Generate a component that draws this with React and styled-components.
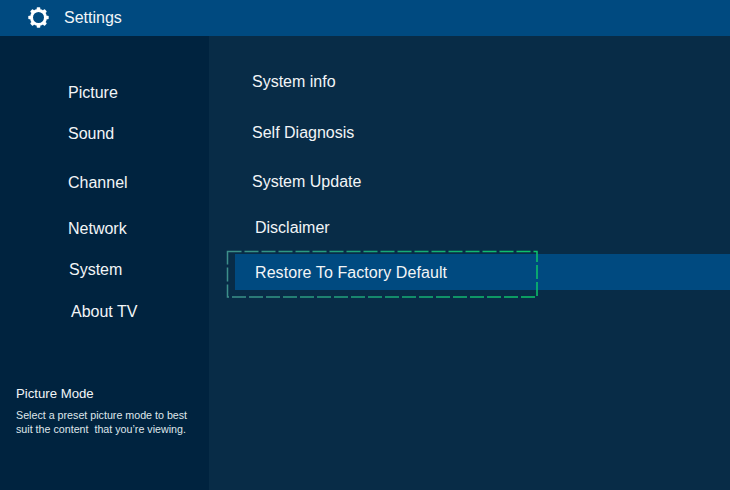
import React from 'react';
import styled, { createGlobalStyle } from 'styled-components';

const GlobalStyle = createGlobalStyle`
    html, body {
        margin: 0;
        padding: 0;
        background: #082c47;
    }
`;

const Screen = styled.div`
    width: 730px;
    height: 490px;
    overflow: hidden;
    display: flex;
    flex-direction: column;
    background: #082c47;
    color: #f2f5f7;
    font-family: 'Liberation Sans', Arial, sans-serif;
`;

const Header = styled.header`
    height: 36px;
    box-sizing: border-box;
    padding: 0 0 1px 28px;
    flex: none;
    display: flex;
    align-items: center;
    gap: 15px;
    background: #004a80;
    font-size: 16px;
`;

const Body = styled.div`
    flex: 1;
    display: flex;
`;

const Sidebar = styled.aside`
    width: 209px;
    flex: none;
    display: flex;
    flex-direction: column;
    background: #00233f;
`;

const CategoryList = styled.nav`
    display: flex;
    flex-direction: column;
    padding-top: 36px;
`;

const Category = styled.div`
    height: ${(p) => p.$h}px;
    padding-left: ${(p) => p.$left}px;
    display: flex;
    align-items: center;
    font-size: 16px;
`;

const Help = styled.div`
    margin-top: 55px;
    padding-left: 16px;
`;

const HelpTitle = styled.div`
    font-size: 13.2px;
    line-height: 16px;
    margin-bottom: 6px;
`;

const HelpText = styled.p`
    margin: 0;
    font-size: 10.7px;
    line-height: 14px;
    white-space: pre;
    color: #dfe6eb;
`;

const Content = styled.main`
    flex: 1;
    display: flex;
    flex-direction: column;
    padding-top: 24px;
`;

const Item = styled.div`
    height: ${(p) => p.$h}px;
    padding-left: ${(p) => p.$left}px;
    display: flex;
    align-items: center;
    font-size: 16px;
`;

const SelectedRow = styled.div`
    position: relative;
    height: 36px;
    box-sizing: border-box;
    margin-left: 26px;
    padding: 2px 0 0 20px;
    display: flex;
    align-items: center;
    font-size: 16px;
    letter-spacing: 0.08px;
    background: #004a80;
`;

const FocusFrame = styled.svg`
    position: absolute;
    left: -9px;
    top: -4px;
`;

const Gear = () => (
    <svg width="21" height="21" viewBox="0 0 21 21" fill="none">
        <circle cx="10.5" cy="10.5" r="7" stroke="#fff" strokeWidth="3" />
        {[0, 45, 90, 135, 180, 225, 270, 315].map((a) => (
            <rect key={a} x="8.7" y="0.3" width="3.6" height="3" rx="0.8" fill="#fff" transform={`rotate(${a} 10.5 10.5)`} />
        ))}
    </svg>
);

const categories = [
    { label: 'Picture', h: 41, left: 68 },
    { label: 'Sound', h: 41, left: 68 },
    { label: 'Channel', h: 57, left: 68 },
    { label: 'Network', h: 36, left: 68 },
    { label: 'System', h: 45, left: 69 },
    { label: 'About TV', h: 39, left: 71 },
];

const items = [
    { label: 'System info', h: 44, left: 43 },
    { label: 'Self Diagnosis', h: 58, left: 43 },
    { label: 'System Update', h: 40, left: 43 },
    { label: 'Disclaimer', h: 52, left: 46 },
];

export default function App() {
    return (
        <Screen>
            <GlobalStyle />
            <Header>
                <Gear />
                <span>Settings</span>
            </Header>
            <Body>
                <Sidebar>
                    <CategoryList>
                        {categories.map((c) => (
                            <Category key={c.label} $h={c.h} $left={c.left}>{c.label}</Category>
                        ))}
                    </CategoryList>
                    <Help>
                        <HelpTitle>Picture Mode</HelpTitle>
                        <HelpText>{'Select a preset picture mode to best\nsuit the content  that you\u2019re viewing.'}</HelpText>
                    </Help>
                </Sidebar>
                <Content>
                    {items.map((i) => (
                        <Item key={i.label} $h={i.h} $left={i.left}>{i.label}</Item>
                    ))}
                    <SelectedRow>
                        <FocusFrame width="314" height="50" fill="none">
                            <defs>
                                <linearGradient id="focus" x1="0" y1="0" x2="1" y2="0">
                                    <stop offset="0" stopColor="#3d8f8a" />
                                    <stop offset="0.5" stopColor="#18a878" />
                                    <stop offset="1" stopColor="#0cc46a" />
                                </linearGradient>
                            </defs>
                            <rect x="1.5" y="1.5" width="309.5" height="45.5" stroke="url(#focus)" strokeWidth="1.5" strokeDasharray="14 3" />
                        </FocusFrame>
                        Restore To Factory Default
                    </SelectedRow>
                </Content>
            </Body>
        </Screen>
    );
}
